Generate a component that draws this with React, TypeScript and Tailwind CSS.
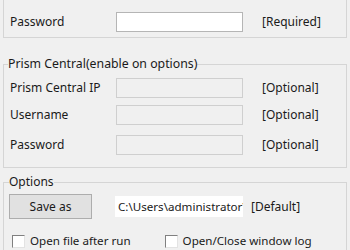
import React from "react";

const font = { fontFamily: '"Noto Sans", "Open Sans", sans-serif' };

function Row({ label, enabled, note }: { label: string; enabled?: boolean; note: string }) {
  return (
    <div className="flex items-center h-[20px]">
      <div className="w-[112px] pl-[6px]">{label}</div>
      <div
        className={
          "w-[127px] h-[20px] border " +
          (enabled ? "bg-white border-[#b5b5b5]" : "bg-[#f0f0f0] border-[#cfcfcf]")
        }
      />
      <div className="ml-[19px]">{note}</div>
    </div>
  );
}

function Check() {
  return (
    <div className="w-[13px] h-[13px] bg-white border border-t-[#808080] border-l-[#808080] border-b-[#e3e3e3] border-r-[#e3e3e3]" />
  );
}

export default function App() {
  return (
    <div
      className="w-[350px] h-[250px] overflow-hidden bg-[#f0f0f0] text-[12px] leading-[16px] text-[#1a1a1a] pl-[3px] pr-[3px]"
      style={font}
    >
      <fieldset className="border border-[#d5d5d5] -mt-[10px] h-[48px] pt-[21px]">
        <Row label="Password" enabled note="[Required]" />
      </fieldset>

      <fieldset className="border border-[#d5d5d5] mt-[18px] h-[112px] pt-[6px]">
        <legend className="ml-[4px] px-0 text-[12.3px]">Prism Central(enable on options)</legend>
        <div className="flex flex-col">
          <Row label="Prism Central IP" note="[Optional]" />
          <div className="mt-[7px]">
            <Row label="Username" note="[Optional]" />
          </div>
          <div className="mt-[10px]">
            <Row label="Password" note="[Optional]" />
          </div>
        </div>
      </fieldset>

      <fieldset className="border border-[#d5d5d5] mt-[6px] h-[100px] pt-[4px]">
        <legend className="ml-[5px] px-0">Options</legend>
        <div className="flex items-center">
          <button className="ml-[5px] w-[83px] h-[25px] bg-[#e1e1e1] border border-[#adadad] text-[12px]">
            Save as
          </button>
          <input
            readOnly
            value="C:\Users\administrator\Desktop"
            className="ml-[23px] w-[128px] h-[21px] bg-white pl-[3px] text-[11.6px] outline-none"
            style={font}
          />
          <div className="ml-[8px]">[Default]</div>
        </div>
        <div className="flex items-center mt-[14px]">
          <div className="ml-[8px]">
            <Check />
          </div>
          <div className="ml-[5px] text-[11.6px]">Open file after run</div>
          <div className="ml-[34px]">
            <Check />
          </div>
          <div className="ml-[5px] text-[11.6px]">Open/Close window log</div>
        </div>
      </fieldset>
    </div>
  );
}
